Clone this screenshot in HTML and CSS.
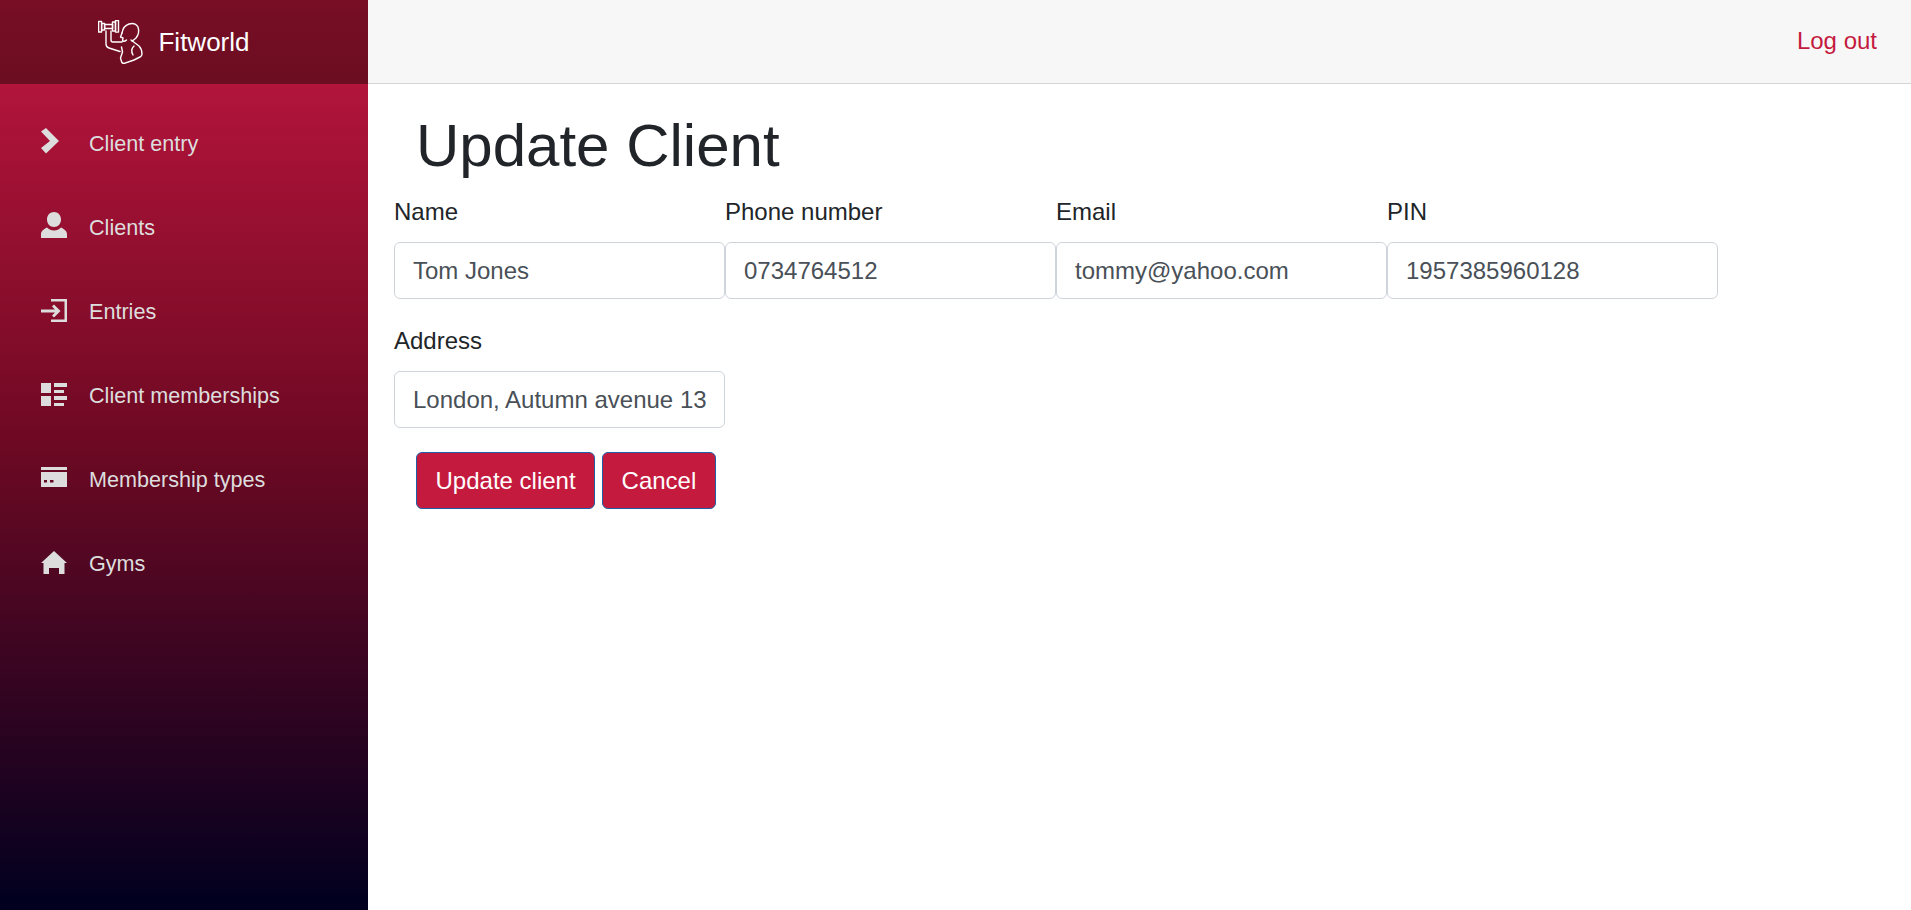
FILE: index.html
```html
<!DOCTYPE html>
<html lang="en">
<head>
    <meta charset="UTF-8">
    <title>Fitworld</title>
    <link rel="stylesheet" href="styles.css">
</head>
<body>
<div id="page-wrapper">
    <nav class="sidebar">
        <div class="brand">
            <svg class="brand-logo" viewBox="0 0 45 44" fill="none" stroke="#fff" stroke-width="1.4" stroke-linejoin="round" stroke-linecap="round">
                <rect x="0.600" y="1.500" width="3" height="10.500"/>
                <rect x="3.600" y="3.500" width="3" height="6.500"/>
                <rect x="14.500" y="2" width="3" height="9"/>
                <rect x="17.500" y="0.600" width="3" height="11.500"/>
                <rect x="6.600" y="4.500" width="8" height="4"/>
                <path d="M8 11v13q0 3 3 4l11 3.500"/>
                <path d="M13 11v9q0 2 2 2h9"/>
                <path d="M24 13q1-7 7-9 6-2 9 3 2 6-2 11-2 2-4 3"/>
                <path d="M24 13l-1.500 4 2.500 1-.5 3q2 1 4-1"/>
                <path d="M33 20l8 6q3 3 3 8 0 2-2 3l-6 3-10 3.500q-2 0-2.500-2l-1-3.500 2-6-1-5"/>
                <path d="M36 26q-4 4-1 9"/>
            </svg>
            <span class="brand-name">Fitworld</span>
        </div>
        <ul class="menu">
            <li class="menu-item">
                <span class="menu-icon"><svg viewBox="0 0 26 26"><path d="M0 3.500L5 0l13 13L5 25.500 0 20l9-7z"/></svg></span>
                <a href="#">Client entry</a>
            </li>
            <li class="menu-item">
                <span class="menu-icon"><svg viewBox="0 0 26 26"><path d="M13 0c4 0 7 3 7 7.500S17 15 13 15s-7-3-7-7.500S9 0 13 0zM0 26v-4c0-3 3-5 6-6.500 2 2 4 3 7 3s5-1 7-3c3 1.500 6 3.500 6 6.500v4z"/></svg></span>
                <a href="#">Clients</a>
            </li>
            <li class="menu-item">
                <span class="menu-icon"><svg viewBox="0 0 26 26"><path d="M10 3h16v23H10v-2.500h13.500v-18H10zM0 13.500h14l-3-3 2-2 6.500 6.500-6.500 6.500-2-2 3-3H0z"/></svg></span>
                <a href="#">Entries</a>
            </li>
            <li class="menu-item">
                <span class="menu-icon"><svg viewBox="0 0 26 26"><path d="M0 3h10v10H0zM0 16h10v10H0zM13 3h13v4H13zM13 10h10v3H13zM13 16h13v4H13zM13 23h10v3H13z"/></svg></span>
                <a href="#">Client memberships</a>
            </li>
            <li class="menu-item">
                <span class="menu-icon"><svg viewBox="0 0 26 26"><path fill-rule="evenodd" d="M0 3h26v3H0zM0 8h26v15H0zM3 16v2.500h3V16zM9 16v2.500h3.500V16z"/></svg></span>
                <a href="#">Membership types</a>
            </li>
            <li class="menu-item">
                <span class="menu-icon"><svg viewBox="0 0 26 26"><path d="M13 3l13 12h-2.500v11H18v-6h-10v6H2.500V15H0z"/></svg></span>
                <a href="#">Gyms</a>
            </li>
        </ul>
    </nav>
    <div class="main">
        <header class="topbar">
            <a class="logout" href="#">Log out</a>
        </header>
        <section class="content">
            <h1 class="title">Update Client</h1>
            <form class="client-form">
                <div class="field">
                    <label>Name</label>
                    <input type="text" value="Tom Jones">
                </div>
                <div class="field">
                    <label>Phone number</label>
                    <input type="text" value="0734764512">
                </div>
                <div class="field">
                    <label>Email</label>
                    <input type="text" value="tommy@yahoo.com">
                </div>
                <div class="field">
                    <label>PIN</label>
                    <input type="text" value="1957385960128">
                </div>
                <div class="field">
                    <label>Address</label>
                    <input type="text" value="London, Autumn avenue 13">
                </div>
            </form>
            <div class="actions">
                <button type="button" class="btn">Update client</button>
                <button type="button" class="btn">Cancel</button>
            </div>
        </section>
    </div>
</div>
</body>
</html>
```

FILE: styles.css
```css
* {
    margin: 0;
    border: 0;
    padding: 0;
    box-sizing: border-box;
}
html, body {
    height: 100%;
}
body {
    font-family: "Liberation Sans", Arial, sans-serif;
    font-size: 24px;
    color: #212529;
    background-color: #fff;
}
#page-wrapper {
    height: 100%;
    display: flex;
}
.sidebar {
    width: 368px;
    height: 100%;
    flex-shrink: 0;
    background: linear-gradient(#b2143a 84px, #6e0923 440px, #00001f 100%);
}
.brand {
    height: 84px;
    display: flex;
    align-items: center;
    justify-content: center;
    gap: 15px;
    padding-right: 20px;
    background: linear-gradient(#770e25, #6c0d21);
}
.brand-logo {
    width: 45px;
    height: 44px;
}
.brand-name {
    font-size: 26px;
    color: #fff;
}
.menu {
    list-style: none;
    padding-top: 18px;
}
.menu-item {
    height: 84px;
    display: flex;
    align-items: center;
    padding-left: 41px;
    font-size: 21.6px;
}
.menu-item a {
    color: #ddd;
    text-decoration: none;
}
.menu-icon {
    width: 48px;
    height: 26px;
    flex-shrink: 0;
    margin-top: -6px;
}
.menu-icon svg {
    display: block;
    width: 26px;
    height: 26px;
    fill: #ddd;
}
.main {
    flex-grow: 1;
}
.topbar {
    height: 84px;
    display: flex;
    align-items: center;
    justify-content: flex-end;
    padding-right: 34px;
    padding-bottom: 2px;
    background-color: #f7f7f7;
    border-bottom: 1px solid #d4d4d4;
}
.logout {
    color: #c41a3e;
    text-decoration: none;
}
.content {
    padding-left: 26px;
}
.title {
    font-size: 60px;
    font-weight: 400;
    line-height: 72px;
    padding: 26px 0 0 22px;
}
.client-form {
    display: grid;
    grid-template-columns: repeat(4, 331px);
    row-gap: 25px;
    margin-top: 13px;
}
.field label {
    display: block;
    height: 34px;
    line-height: 34px;
    margin-bottom: 13px;
    color: #212529;
}
.field input {
    display: block;
    width: 100%;
    height: 57px;
    padding: 0 18px;
    font-family: inherit;
    font-size: 24px;
    color: #495057;
    border: 1px solid #ced4da;
    border-radius: 6px;
    outline: 0;
}
.actions {
    display: flex;
    gap: 7px;
    padding: 24px 0 0 22px;
}
.btn {
    height: 57px;
    padding: 0 18.500px;
    font-family: inherit;
    font-size: 24px;
    color: #fff;
    background-color: #c41a3e;
    border: 1px solid #1f5fa8;
    border-radius: 6px;
}
```
